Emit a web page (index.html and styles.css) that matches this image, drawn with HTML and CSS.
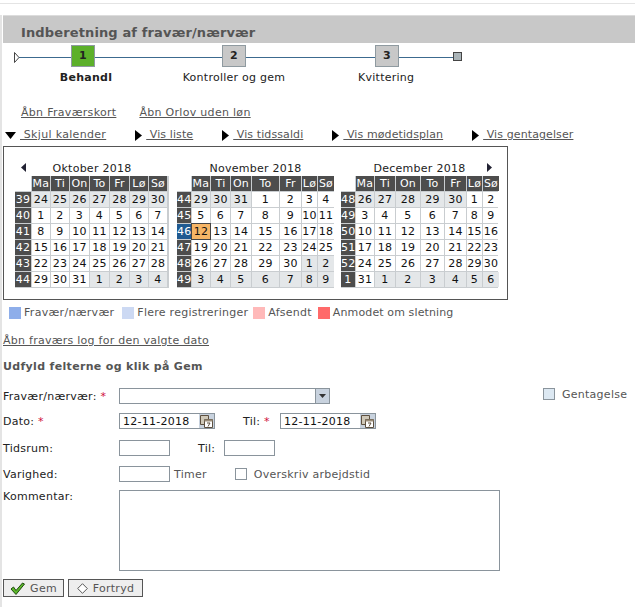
FILE: index.html
```html
<!DOCTYPE html>
<html lang="da">
<head>
<meta charset="utf-8">
<title>Indberetning af fravær/nærvær</title>
<link rel="stylesheet" href="styles.css">
</head>
<body>
<div class="topline"></div>
<main class="page">
  <h1 class="band">Indberetning af fravær/nærvær</h1>
  <div class="stepper">
    <div class="track"></div>
    <svg class="start" width="6" height="11" viewBox="0 0 6 11"><path d="M.5.5 5 5.5.5 10.5Z" fill="#fff" stroke="#444"/></svg>
    <div class="step s1 on">1</div>
    <div class="step s2">2</div>
    <div class="step s3">3</div>
    <div class="end"></div>
  </div>
  <div class="steplabels">
    <span class="sl l1">Behandl</span>
    <span class="sl l2">Kontroller og gem</span>
    <span class="sl l3">Kvittering</span>
  </div>
  <div class="links">
    <a href="#">Åbn Fraværskort</a>
    <a href="#">Åbn Orlov uden løn</a>
  </div>
  <div class="toggles">
    <span class="tog t1"><svg width="11" height="7" viewBox="0 0 11 7"><path d="M0 0H11L5.5 7Z"/></svg><a href="#">&nbsp;Skjul kalender</a></span>
    <span class="tog"><svg width="7" height="11" viewBox="0 0 7 11"><path d="M0 0 7 5.5 0 11Z"/></svg><a href="#">&nbsp;Vis liste</a></span>
    <span class="tog"><svg width="7" height="11" viewBox="0 0 7 11"><path d="M0 0 7 5.5 0 11Z"/></svg><a href="#">&nbsp;Vis tidssaldi</a></span>
    <span class="tog"><svg width="7" height="11" viewBox="0 0 7 11"><path d="M0 0 7 5.5 0 11Z"/></svg><a href="#">&nbsp;Vis mødetidsplan</a></span>
    <span class="tog"><svg width="7" height="11" viewBox="0 0 7 11"><path d="M0 0 7 5.5 0 11Z"/></svg><a href="#">&nbsp;Vis gentagelser</a></span>
  </div>
  <section class="calbox">
    <div class="month m1">
      <div class="mtitle"><svg class="prev" width="5" height="9" viewBox="0 0 5 9"><path d="M5 0 0 4.5 5 9Z"/></svg>Oktober 2018</div>
      <div class="grid">
        <b class="blank"></b><b>Ma</b><b>Ti</b><b>On</b><b>To</b><b>Fr</b><b>Lø</b><b>Sø</b>
        <b class="wk">39</b><i class="o">24</i><i class="o">25</i><i class="o">26</i><i class="o">27</i><i class="o">28</i><i class="o">29</i><i class="o">30</i>
        <b class="wk">40</b><i>1</i><i>2</i><i>3</i><i>4</i><i>5</i><i>6</i><i>7</i>
        <b class="wk">41</b><i>8</i><i>9</i><i>10</i><i>11</i><i>12</i><i>13</i><i>14</i>
        <b class="wk">42</b><i>15</i><i>16</i><i>17</i><i>18</i><i>19</i><i>20</i><i>21</i>
        <b class="wk">43</b><i>22</i><i>23</i><i>24</i><i>25</i><i>26</i><i>27</i><i>28</i>
        <b class="wk">44</b><i>29</i><i>30</i><i>31</i><i class="o">1</i><i class="o">2</i><i class="o">3</i><i class="o">4</i>
      </div>
    </div>
    <div class="month m2">
      <div class="mtitle">November 2018</div>
      <div class="grid">
        <b class="blank"></b><b>Ma</b><b>Ti</b><b>On</b><b>To</b><b>Fr</b><b>Lø</b><b>Sø</b>
        <b class="wk">44</b><i class="o">29</i><i class="o">30</i><i class="o">31</i><i>1</i><i>2</i><i>3</i><i>4</i>
        <b class="wk">45</b><i>5</i><i>6</i><i>7</i><i>8</i><i>9</i><i>10</i><i>11</i>
        <b class="wk cur">46</b><i class="today">12</i><i>13</i><i>14</i><i>15</i><i>16</i><i>17</i><i>18</i>
        <b class="wk">47</b><i>19</i><i>20</i><i>21</i><i>22</i><i>23</i><i>24</i><i>25</i>
        <b class="wk">48</b><i>26</i><i>27</i><i>28</i><i>29</i><i>30</i><i class="o">1</i><i class="o">2</i>
        <b class="wk">49</b><i class="o">3</i><i class="o">4</i><i class="o">5</i><i class="o">6</i><i class="o">7</i><i class="o">8</i><i class="o">9</i>
      </div>
    </div>
    <div class="month m3">
      <div class="mtitle">December 2018<svg class="next" width="5" height="9" viewBox="0 0 5 9"><path d="M0 0 5 4.5 0 9Z"/></svg></div>
      <div class="grid">
        <b class="blank"></b><b>Ma</b><b>Ti</b><b>On</b><b>To</b><b>Fr</b><b>Lø</b><b>Sø</b>
        <b class="wk">48</b><i class="o">26</i><i class="o">27</i><i class="o">28</i><i class="o">29</i><i class="o">30</i><i>1</i><i>2</i>
        <b class="wk">49</b><i>3</i><i>4</i><i>5</i><i>6</i><i>7</i><i>8</i><i>9</i>
        <b class="wk">50</b><i>10</i><i>11</i><i>12</i><i>13</i><i>14</i><i>15</i><i>16</i>
        <b class="wk">51</b><i>17</i><i>18</i><i>19</i><i>20</i><i>21</i><i>22</i><i>23</i>
        <b class="wk">52</b><i>24</i><i>25</i><i>26</i><i>27</i><i>28</i><i>29</i><i>30</i>
        <b class="wk">1</b><i>31</i><i class="o">1</i><i class="o">2</i><i class="o">3</i><i class="o">4</i><i class="o">5</i><i class="o">6</i>
      </div>
    </div>
  </section>
  <ul class="legend">
    <li><span class="sw c1"></span>Fravær/nærvær</li>
    <li><span class="sw c2"></span>Flere registreringer</li>
    <li><span class="sw c3"></span>Afsendt</li>
    <li><span class="sw c4"></span>Anmodet om sletning</li>
  </ul>
  <a class="loglink" href="#">Åbn fraværs log for den valgte dato</a>
  <h2 class="formhead">Udfyld felterne og klik på Gem</h2>
  <form class="form">
    <div class="row r1">
      <label class="lab">Fravær/nærvær: <em>*</em></label>
      <div class="select"><span class="arrow"><svg width="7" height="4" viewBox="0 0 7 4"><path d="M0 0H7L3.500 4Z" fill="#333"/></svg></span></div>
      <span class="check gent"><span class="box blue"></span>Gentagelse</span>
    </div>
    <div class="row r2">
      <label class="lab">Dato: <em>*</em></label>
      <div class="date"><span class="val">12-11-2018</span><span class="calbtn"><svg width="13" height="13" viewBox="0 0 13 13"><path d="M.5.5H8.5V9.5H.5Z" fill="#cfc8b8" stroke="#5d5040"/><path d="M4.5 4.5H12.5V12.5H4.5Z" fill="#fff" stroke="#5d5040"/><path d="M4.5 4.5H12.5V6.5H4.5Z" fill="#9a8c78"/><path d="M7 8H10L8 11.500" fill="none" stroke="#5d5040"/></svg></span></div>
      <label class="til">Til: <em>*</em></label>
      <div class="date"><span class="val">12-11-2018</span><span class="calbtn"><svg width="13" height="13" viewBox="0 0 13 13"><path d="M.5.5H8.5V9.5H.5Z" fill="#cfc8b8" stroke="#5d5040"/><path d="M4.5 4.5H12.5V12.5H4.5Z" fill="#fff" stroke="#5d5040"/><path d="M4.5 4.5H12.5V6.5H4.5Z" fill="#9a8c78"/><path d="M7 8H10L8 11.500" fill="none" stroke="#5d5040"/></svg></span></div>
    </div>
    <div class="row r3">
      <label class="lab">Tidsrum:</label>
      <div class="field"></div>
      <label class="til2">Til:</label>
      <div class="field"></div>
    </div>
    <div class="row r4">
      <label class="lab">Varighed:</label>
      <div class="field"></div>
      <span class="timer">Timer</span>
      <span class="check over"><span class="box"></span>Overskriv arbejdstid</span>
    </div>
    <div class="row r5">
      <label class="lab">Kommentar:</label>
      <div class="area"></div>
    </div>
    <div class="buttons">
      <button type="button" class="btn b1"><svg width="15" height="13" viewBox="0 0 15 13"><path d="M1 7 3.500 5 6 8.500 12.500 1 14.500 2 6 12.500Z" fill="#5cb82a" stroke="#1f4a10"/></svg>Gem</button>
      <button type="button" class="btn b2"><svg width="11" height="11" viewBox="0 0 11 11"><path d="M5.500.7 10.300 5.500 5.500 10.300 .7 5.500Z" fill="#fff" stroke="#555"/></svg>Fortryd</button>
    </div>
  </form>
</main>
</body>
</html>
```
FILE: styles.css
```css
* { box-sizing: border-box; }
html, body { margin: 0; padding: 0; }
body {
  width: 635px;
  height: 607px;
  overflow: hidden;
  background: #fff;
  font-family: "DejaVu Sans", Verdana, sans-serif;
  font-size: 11px;
  letter-spacing: 0.26px;
  color: #222;
}
.topline { height: 4px; border-bottom: 1px solid #e4e4e4; margin-bottom: 11px; }
.page { border-left: 2px solid #e4e4e4; padding-left: 1px; height: 592px; }
a { color: #555; }
.band {
  margin: 0;
  height: 28px;
  padding: 9px 0 0 18px;
  background: #c8c8c8;
  border-top: 1px solid #dcdcdc;
  font-size: 13px;
  line-height: 15px;
  font-weight: bold;
  letter-spacing: 0.13px;
  color: #555;
}
.stepper { position: relative; height: 25px; margin-top: 2px; display: flex; }
.track { position: absolute; left: 15px; top: 12px; width: 440px; height: 1px; background: #3c6a8f; }
.start { position: absolute; left: 11px; top: 7px; }
.step {
  position: relative;
  width: 24px;
  height: 22px;
  background: #c8c8c8;
  border: 1px solid #8f9aa0;
  font-weight: bold;
  font-size: 11px;
  line-height: 19px;
  text-align: center;
  color: #222;
}
.step.on { background: #5cb02a; }
.s1 { margin-left: 68px; }
.s2 { margin-left: 127px; }
.s3 { margin-left: 129px; }
.end { position: relative; width: 9px; height: 9px; margin: 7px 0 0 54px; background: #aab4b8; border: 1px solid #444; }
.steplabels { display: flex; height: 16px; margin-top: 0; line-height: 16px; }
.sl { text-align: center; white-space: nowrap; }
.l1 { margin-left: 53px; width: 60px; font-weight: bold; }
.l2 { margin-left: 65px; width: 106px; }
.l3 { margin-left: 71px; width: 56px; }
.links { display: flex; gap: 23px; padding-left: 18px; margin-top: 19px; height: 16px; line-height: 16px; letter-spacing: 0.3px; }
.toggles { display: flex; gap: 29px; margin-top: 6px; height: 16px; line-height: 16px; letter-spacing: 0.1px; }
.tog { display: flex; align-items: center; white-space: nowrap; }
.tog svg { flex: none; margin-right: 4px; }
.t1 { margin-left: 2px; letter-spacing: 0.32px; }
.calbox {
  display: flex;
  width: 505px;
  height: 154px;
  margin-top: 3px;
  padding: 10px 0 0 11px;
  border: 1px solid #555;
}
.m1 { width: 154px; }
.m2 { width: 157px; margin-left: 8px; }
.m3 { width: 157px; margin-left: 7px; }
.mtitle { position: relative; height: 19px; line-height: 23px; text-align: center; font-size: 11px; }
.prev, .next { position: absolute; top: 6px; fill: #223; }
.prev { left: 6px; }
.next { right: 6px; }
.grid {
  display: grid;
  grid-auto-rows: 15px;
  gap: 1px;
  background: #c9cdd0;
  padding: 0 1px 1px 0;
  line-height: 16px;
  text-align: center;
}
.m1 .grid { grid-template-columns: 16px 18px 18px 19px 19px 19px 18px 18px; }
.m2 .grid { grid-template-columns: 14px 18px 19px 20px 27px 21px 15px 16px; }
.m3 .grid { grid-template-columns: 14px 18px 20px 24px 23px 21px 15px 16px; }
.grid b { background: #4d4d4d; color: #fff; font-weight: normal; }
.grid b.blank { background: #fff; }
.grid b.cur { background: #1f5a91; }
.grid i { font-style: normal; background: #fff; color: #111; }
.grid i.o { background: #e4e7e9; }
.grid i.today { background: #f6b566; outline: 1px solid #444; outline-offset: 0; }
.legend { display: flex; list-style: none; margin: 6px 0 0; padding: 0 0 0 6px; height: 14px; line-height: 14px; color: #555; }
.legend li { display: flex; align-items: center; margin-right: 6px; white-space: nowrap; }
.legend li:first-child { margin-right: 8px; letter-spacing: 0.3px; }
.legend li:nth-child(2) { margin-right: 5px; }
.legend li:last-child { letter-spacing: 0.12px; }
.sw { width: 12px; height: 12px; margin-right: 3px; }
.c1 { background: #8eaeea; }
.c2 { background: #ccd9f3; }
.c3 { background: #ffb9b9; }
.c4 { background: #ff6a6a; }
.loglink { display: block; margin-top: 13px; height: 16px; line-height: 16px; }
.formhead { margin: 10px 0 0; height: 16px; font-size: 11px; line-height: 16px; font-weight: bold; letter-spacing: 0.33px; color: #555; }
.form { display: block; }
.row { display: flex; align-items: center; }
.lab { width: 116px; flex: none; white-space: nowrap; }
em { font-style: normal; color: #d0103a; }
.r1 { margin-top: 13px; height: 16px; }
.r2 { margin-top: 9px; height: 16px; }
.r3 { margin-top: 11px; height: 16px; }
.r4 { margin-top: 10px; height: 16px; }
.r5 { margin-top: 8px; align-items: flex-start; }
.select { position: relative; width: 211px; height: 16px; border: 1px solid #8a949c; background: #fff; }
.arrow { position: absolute; right: 0; top: 0; bottom: 0; width: 14px; background: #c8d2de; border-left: 1px solid #8a949c; display: flex; align-items: center; justify-content: center; }
.gent { margin-left: 213px; margin-bottom: 4px; color: #666; }
.check { display: flex; align-items: center; white-space: nowrap; color: #555; }
.box { width: 12px; height: 12px; border: 1px solid #8a949c; margin-right: 7px; background: #fff; }
.box.blue { background: #dce8f2; }
.date { display: flex; width: 96px; height: 16px; border: 1px solid #8a949c; align-items: center; }
.val { flex: 1; padding-left: 3px; color: #111; }
.calbtn { width: 15px; height: 14px; background: #c8d2de; display: flex; align-items: center; justify-content: center; }
.til { width: 65px; padding-left: 28px; white-space: nowrap; }
.til2 { width: 54px; padding-left: 28px; }
.field { width: 51px; height: 16px; border: 1px solid #8a949c; }
.timer { margin-left: 4px; color: #555; }
.over { margin-left: 28px; }
.area { width: 381px; height: 81px; border: 1px solid #8a949c; }
.buttons { display: flex; gap: 4px; margin-top: 8px; }
.btn {
  display: flex;
  align-items: center;
  justify-content: center;
  gap: 5px;
  height: 18px;
  padding: 0;
  border: 1px solid #555;
  background: #eee;
  font: inherit;
  letter-spacing: inherit;
  color: #555;
}
.b1 { width: 61px; }
.b2 { width: 75px; }
```
